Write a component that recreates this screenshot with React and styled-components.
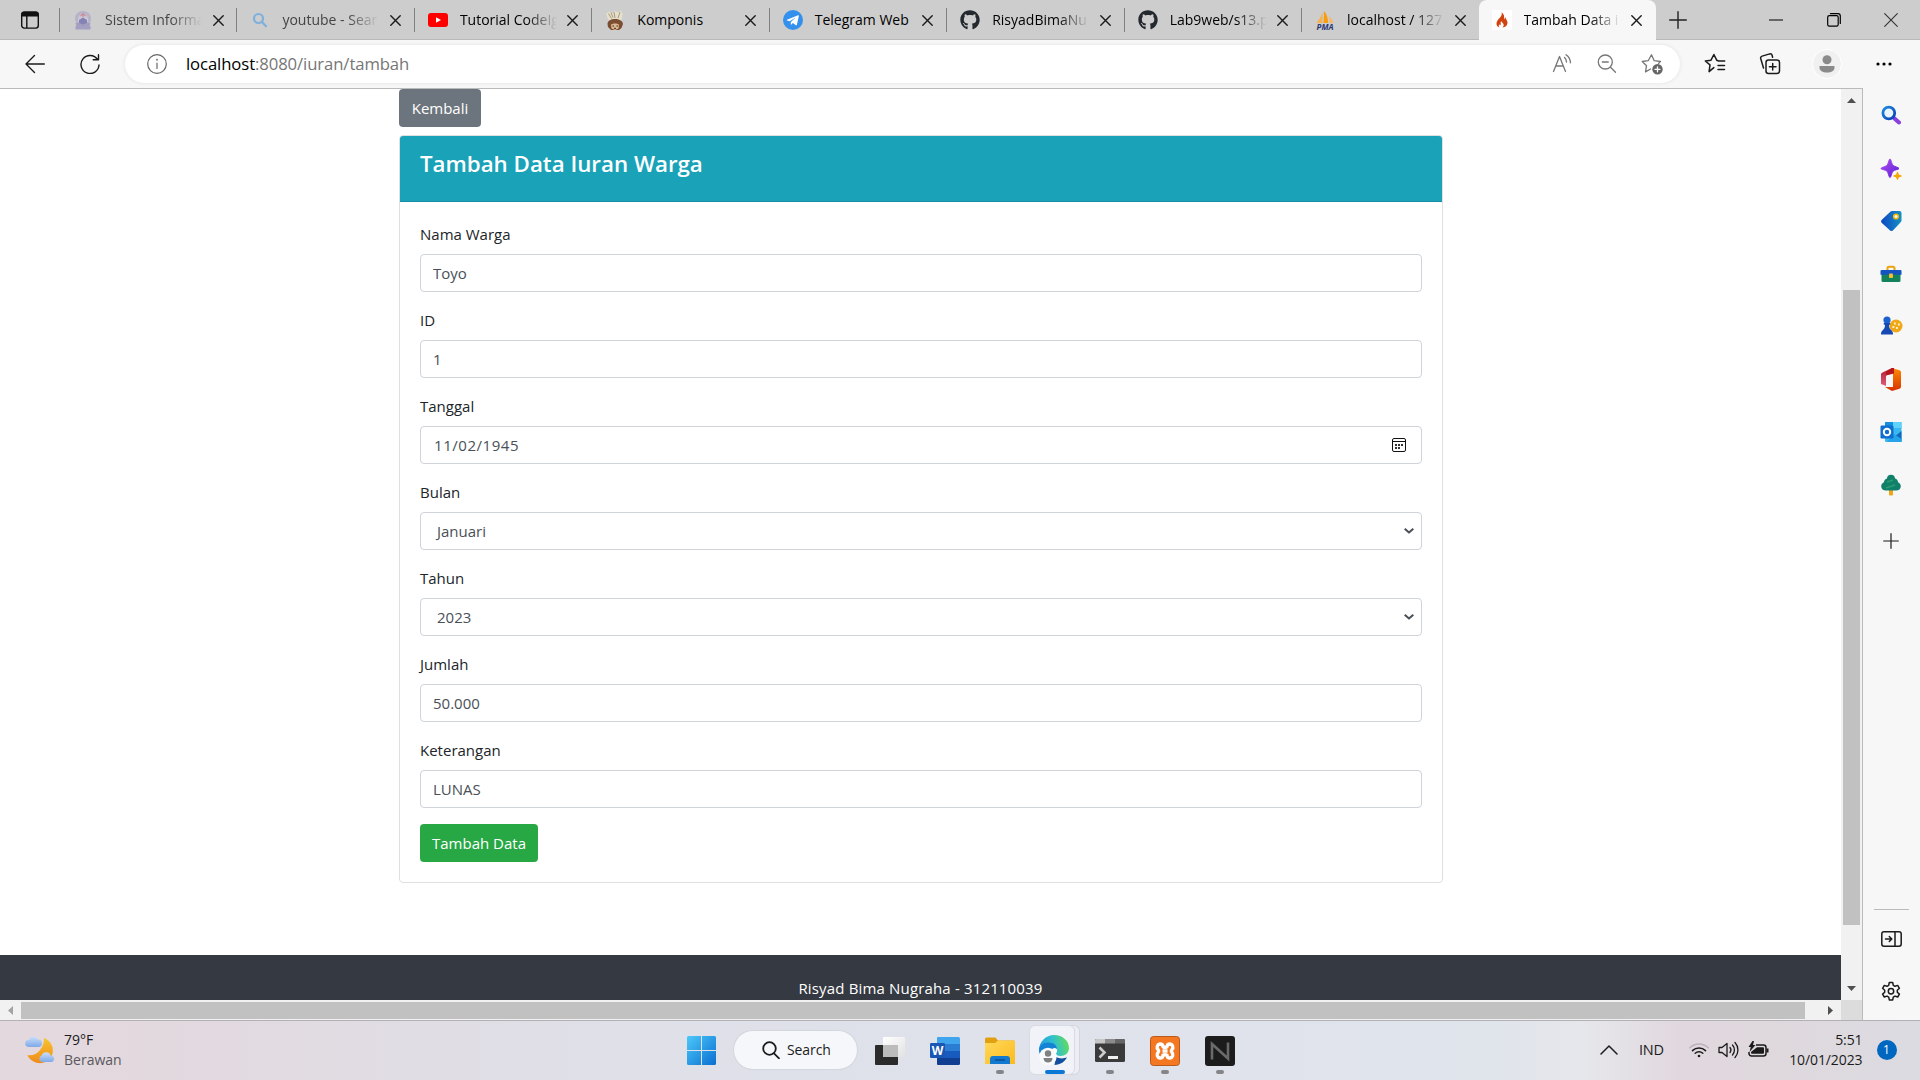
import React from "react";
import styled, { createGlobalStyle } from "styled-components";
import { FaGithub } from "react-icons/fa";

const Global = createGlobalStyle`
  * { box-sizing: border-box; }
  body { margin: 0; overflow: hidden; font-family: "Open Sans", "Noto Sans", sans-serif; color: #212529; }
  svg { display: block; flex: none; }
`;

const Screen = styled.div`
  width: 1920px;
  height: 1080px;
  display: flex;
  flex-direction: column;
  background: #f7f7f7;
  overflow: hidden;
`;

/* ---------- tab strip ---------- */
const TabStrip = styled.div`
  height: 40px;
  flex: none;
  display: flex;
  background: #cdcdcd;
  box-shadow: inset 0 -1px 0 #b9b9b9;
`;
const TabMenu = styled.div`
  width: 59px;
  height: 40px;
  display: flex;
  align-items: center;
  padding-left: 20px;
`;
const Tab = styled.div`
  position: relative;
  width: 177.45px;
  height: 40px;
  flex: none;
  display: flex;
  align-items: center;
  padding-left: ${(p) => (p.$active ? 13 : 14)}px;
  color: ${(p) => (p.$dim ? "#444" : "#000")};
  background: ${(p) => (p.$active ? "#f7f7f7" : "transparent")};
  border-radius: 8px 8px 0 0;
  &::before {
    content: "";
    position: absolute;
    left: 0;
    top: 8px;
    width: ${(p) => (p.$active ? 0 : 1)}px;
    height: 24px;
    background: #808080;
  }
`;
const Favicon = styled.div`
  width: 20px;
  height: 20px;
  display: grid;
  place-items: center;
  background: ${(p) => p.$bg || "transparent"};
`;
const TabTitle = styled.div`
  width: 97px;
  margin-left: 12px;
  margin-right: 8px;
  font-size: 14px;
  line-height: 20px;
  white-space: nowrap;
  mask-image: ${(p) => (p.$fade ? "linear-gradient(90deg, #000 68%, transparent)" : "none")};
`;
const TabClose = styled.div`
  width: 16px;
  display: grid;
  place-items: center;
`;
const NewTab = styled.div`
  width: 44px;
  display: grid;
  place-items: center;
`;
const WindowButtons = styled.div`
  margin-left: auto;
  display: flex;
  & > div {
    width: 57.5px;
    display: grid;
    place-items: center;
  }
`;

/* ---------- toolbar ---------- */
const Toolbar = styled.div`
  height: 48px;
  flex: none;
  display: flex;
  align-items: center;
  padding: 0 0 1px 25px;
`;
const NavButtons = styled.div`
  width: 100px;
  flex: none;
  display: flex;
  gap: 35px;
`;
const AddressBar = styled.div`
  width: 1555px;
  flex: none;
  height: 38px;
  border-radius: 19px;
  background: #fff;
  box-shadow: 0 0 4px rgba(0, 0, 0, 0.09);
  display: flex;
  align-items: center;
  padding: 0 16px 0 22px;
`;
const Url = styled.div`
  margin-left: 19px;
  flex: 1;
  font-size: 16.7px;
  letter-spacing: -0.1px;
  color: #767676;
  & > span { color: #000; }
`;
const BarIcons = styled.div`
  display: flex;
  align-items: center;
  gap: 23px;
`;
const ToolIcons = styled.div`
  display: flex;
  align-items: center;
  flex: none;
  margin-left: 22px;
`;
const ToolSlot = styled.div`
  width: ${(p) => p.$w}px;
  padding-left: ${(p) => p.$pad || 0}px;
  display: grid;
  place-items: center;
`;
const Avatar = styled.div`
  width: 30px;
  height: 30px;
  border-radius: 50%;
  background: #f0f0f0;
  border: 1px solid #fff;
  display: grid;
  place-items: center;
`;

/* ---------- page ---------- */
const Middle = styled.div`
  height: 932px;
  flex: none;
  display: flex;
`;
const Frame = styled.div`
  width: 1863px;
  border-top: 1px solid #bababa;
  border-right: 1px solid #bababa;
  display: grid;
  grid-template-columns: 1841px 21px;
  grid-template-rows: 911px 20px;
  background: #f1f1f1;
`;
const Page = styled.div`
  background: #fff;
  overflow: hidden;
  display: flex;
  flex-direction: column;
`;
const Container = styled.div`
  width: 1044px;
  height: 866px;
  flex: none;
  margin-left: 399px;
  font-size: 15px;
`;
const Button = styled.button`
  display: block;
  height: 38px;
  width: ${(p) => p.$w}px;
  padding: 0;
  border: 0;
  border-radius: 4px;
  background: ${(p) => p.$bg};
  color: #fff;
  font: 15px/38px "Open Sans", sans-serif;
`;
const Card = styled.div`
  margin-top: 8px;
  height: 748px;
  border: 1px solid #dfdfdf;
  border-radius: 4px;
`;
const CardHeader = styled.div`
  height: 66px;
  padding: 13px 20px;
  background: #19a2b8;
  border-bottom: 1px solid #148ea2;
  border-radius: 3px 3px 0 0;
  color: #fff;
  font-size: 22.3px;
  font-weight: 600;
  line-height: 30px;
`;
const CardBody = styled.form`
  padding: 20px;
`;
const Field = styled.div`
  height: 86px;
`;
const Label = styled.label`
  display: block;
  height: 32px;
  line-height: 24px;
  color: #212529;
`;
const Control = styled.div`
  height: 38px;
  display: flex;
  align-items: center;
  justify-content: space-between;
  border: 1px solid #ced4da;
  border-radius: 4px;
  padding: 0 ${(p) => p.$right}px 0 ${(p) => p.$left}px;
  letter-spacing: ${(p) => p.$ls || 0}px;
  color: #495057;
  background: #fff;
`;
const Footer = styled.div`
  height: 45px;
  flex: none;
  background: #353941;
  color: #fff;
  text-align: center;
  padding-top: 21px;
  font-size: 15px;
  letter-spacing: 0.16px;
  line-height: 24px;
`;
const VBar = styled.div`
  display: flex;
  flex-direction: column;
  align-items: center;
  padding: 9px 0;
`;
const VThumb = styled.div`
  width: 17px;
  height: 635px;
  margin-top: 187px;
  margin-bottom: auto;
  background: #c1c1c1;
`;
const HBar = styled.div`
  display: flex;
  align-items: center;
  justify-content: space-between;
  padding: 0 8px;
`;
const HThumb = styled.div`
  width: 1784px;
  height: 17px;
  margin-right: 15px;
  background: #c1c1c1;
`;
const Corner = styled.div`
  background: #dcdcdc;
`;
const SideBar = styled.div`
  flex: 1;
  display: flex;
  flex-direction: column;
  align-items: center;
  padding: 0 1px 3px 0;
`;
const SideSlot = styled.div`
  height: ${(p) => p.$h}px;
  flex: none;
  display: grid;
  place-items: center;
`;
const SideRule = styled.div`
  width: 35px;
  height: 1px;
  background: #bbb;
  margin-top: auto;
`;

/* ---------- taskbar ---------- */
const Taskbar = styled.div`
  height: 60px;
  flex: none;
  border-top: 1px solid #b3b1b5;
  display: flex;
  align-items: center;
  background: linear-gradient(90deg, #e3d8de 0, #e2d9df 170px, #dfe0e8 620px, #dfe2eb 1000px, #e0e4eb 1500px, #e6e7eb 1585px, #e0d8de 1680px, #dfd8dd 1760px, #dcdbe1 1900px);
`;
const Weather = styled.div`
  width: 681px;
  padding: 0 0 2px 24px;
  display: flex;
  align-items: center;
  gap: 8px;
  font-size: 14px;
  line-height: 20px;
  color: #1b1b1b;
  & span { display: block; color: #5b585b; }
`;
const Apps = styled.div`
  width: 914px;
  height: 59px;
  display: flex;
  align-items: center;
`;
const SearchPill = styled.div`
  width: 123px;
  height: 38px;
  margin: 0 5px 1px 12px;
  border-radius: 19px;
  background: #f6f7fa;
  box-shadow: 0 0 1px 1px rgba(0, 0, 0, 0.05);
  display: flex;
  align-items: center;
  padding: 0 0 1px 28px;
  gap: 7px;
  font-size: 14px;
  letter-spacing: -0.1px;
  color: #1b1b1b;
`;
const TaskApp = styled.div`
  position: relative;
  width: ${(p) => p.$w || 55}px;
  height: 59px;
  display: grid;
  place-items: center;
  &::after {
    content: "";
    position: absolute;
    bottom: 6px;
    left: ${(p) => (p.$active ? 17.5 : 23.5)}px;
    width: ${(p) => (p.$active ? 20 : p.$open ? 8 : 0)}px;
    height: 4px;
    border-radius: 2px;
    background: ${(p) => (p.$active ? "#0a78d4" : "#858589")};
  }
`;
const EdgeTile = styled.div`
  width: 44px;
  height: 48px;
  margin: 0 5px 1px 0;
  border-radius: 5px;
  background: #f1f3f8;
  box-shadow: 0 0 0 1px #d9dbe2, 5px 0 0 0 #eceef4, 5px 0 0 1px #d5d7de;
  display: grid;
  place-items: center;
  & svg { margin-left: 4px; }
`;
const Tray = styled.div`
  flex: 1;
  height: 59px;
  display: flex;
  align-items: center;
  color: #1b1b1b;
  padding: 0 0 2px 5px;
  font-size: 14px;
`;
const Lang = styled.div`
  width: 50px;
  margin-left: 21px;
  font-size: 14.5px;
  letter-spacing: -0.2px;
`;
const TrayIcons = styled.div`
  display: flex;
  align-items: center;
  gap: 9px;
`;
const Clock = styled.div`
  width: 93.5px;
  line-height: 20px;
  text-align: right;
  letter-spacing: -0.1px;
`;
const Badge = styled.div`
  width: 20px;
  height: 20px;
  margin-left: 14px;
  border-radius: 50%;
  background: #0067c0;
  color: #fff;
  font-size: 12px;
  line-height: 20px;
  text-align: center;
`;

const Line = ({ w = 20, h = w, vb, c = "#1b1b1b", s = 1.4, children, ...r }) => (
  <svg width={w} height={h} viewBox={vb || `0 0 ${w} ${h}`} fill="none" stroke={c} strokeWidth={s} strokeLinecap="round" strokeLinejoin="round" {...r}>
    {children}
  </svg>
);
const Pic = ({ w = 20, h = w, children }) => (
  <svg width={w} height={h} viewBox={`0 0 ${w} ${h}`}>{children}</svg>
);

const Campus = () => (
  <Pic>
    <path d="M10 1C5.500 1 2 4 2 8.500c0 2 .5 3.500 1.500 4.500h13c1-1 1.500-2.500 1.500-4.500C18 4 14.500 1 10 1z" fill="#b7b3c8" />
    <path d="M5 9a5 5 0 0 1 10 0v3H5z" fill="#cbc7d4" />
    <path d="M10 3v4M7.500 6L10 4l2.500 2" stroke="#d08a96" strokeWidth="1.100" fill="none" />
    <path d="M6 10l4-2.500 4 2.500v5H6z" fill="#8582b6" />
    <path d="M2.500 13h4l3.500 1.500 3.500-1.500h4l-1 3h-13z" fill="#a19ec0" />
    <path d="M2.500 16h15v3.500h-15z" fill="#a3a0c4" />
  </Pic>
);
const Komponis = () => (
  <Pic>
    <path d="M1 4l3-2.500L7 3l3-2 3 1.500L16 .5l1.500 3-.5 6-5 3H6L3 9z" fill="#e6dfcb" />
    <path d="M3.500 3.500l3 5M9 2l1 6M15 2l-2 6M6 2.500l2 5" stroke="#978a6c" strokeWidth=".8" />
    <path d="M2.500 14c0-3.500 3.500-5 7.500-5s7.500 1.500 8 5l-1.500 4-2.500 2H6l-3-3z" fill="#7b4d31" />
    <path d="M6 14.500c2-1.500 6-1.500 8 0l-.5 4-3.500 1.500-3.500-1.500z" fill="#dcb992" />
    <path d="M7.500 16h1.500M11.500 16H13M9 18.300h2" stroke="#3f2a1c" />
  </Pic>
);
const SearchFav = () => (
  <Line w={20} c="#7fb0dc" s={2.200}><circle cx="8.500" cy="8.500" r="4.500" /><path d="M12 12l4 4.300" /></Line>
);
const YouTube = () => (
  <Pic><rect x="0" y="3" width="20" height="14" rx="3" fill="#f00" /><path d="M8 7.200v5.600L13 10z" fill="#fff" /></Pic>
);
const Telegram = () => (
  <Pic><circle cx="10" cy="10" r="10" fill="#3390ec" /><path d="M4 9.800l11-4.500c.6-.2 1 .1.800.9l-1.900 8.600c-.1.600-.6.700-1 .4l-3-2.200-1.500 1.500c-.3.300-.7.200-.7-.2l.2-2.400 4.800-4.500-6 3.900-2.600-.8c-.6-.2-.6-.5-.1-.7z" fill="#fff" /></Pic>
);
const Pma = () => (
  <Pic>
    <path d="M7.500 2v11H1.500C4 10 6.500 6 7.500 2z" fill="#f9b04a" />
    <path d="M9 1c3 3 4.200 8 4 12H8.700z" fill="#f89c0e" />
    <path d="M14 6c2 2 4 5 4.300 7H14.500z" fill="#f9b866" />
    <text x="10" y="19.500" textAnchor="middle" fontFamily="Open Sans, sans-serif" fontSize="8" fontWeight="700" fontStyle="italic" fill="#2b3a78">PMA</text>
  </Pic>
);
const Flame = () => (
  <Pic><path d="M9.600 2.500c.7 2.400-.5 3.800-2 5.600C6 10 4.300 11.500 4.500 14c.1 1.700 1.300 3 3 3.600-.9-1-1-2.300-.2-3.300.5 1.200 1.500 1 1.500 0 0-1.300-.6-1.800.5-3.200 0 1.400 2.400 1.900 2.400 4 0 1-.4 1.800-1.200 2.500 3-.5 5-2.300 5-4.900 0-2.200-1.600-3.200-2.100-5.400-.6.700-.6 1.300-.2 2.200-1.700-.7-.7-2.500-1.300-4.200-.4-1.200-1.200-2.200-2.300-2.800z" fill="#d2440f" /></Pic>
);

const TABS = [
  { t: "Sistem Informa", icon: <Campus />, fade: 1, dim: 1 },
  { t: "youtube - Sear", icon: <SearchFav />, fade: 1, dim: 1 },
  { t: "Tutorial CodeIg", icon: <YouTube />, fade: 1 },
  { t: "Komponis", icon: <Komponis /> },
  { t: "Telegram Web", icon: <Telegram /> },
  { t: "RisyadBimaNu", icon: <FaGithub size={20} color="#24292f" />, fade: 1 },
  { t: "Lab9web/s13.p", icon: <FaGithub size={20} color="#24292f" />, fade: 1 },
  { t: "localhost / 127", icon: <Pma />, fade: 1 },
  { t: "Tambah Data i", icon: <Flame />, fade: 1, active: 1 },
];

const Calendar = () => (
  <svg width="14" height="14" viewBox="0 0 14 14">
    <rect x=".5" y=".5" width="13" height="13" rx="1.500" fill="none" stroke="#111" />
    <path d="M.5 3.500h13" stroke="#111" />
    <path d="M3 6h2v2H3zM6 6h2v2H6zM9 6h2v2H9zM3 9h2v2H3zM6 9h2v2H6z" fill="#333" />
  </svg>
);
const Chevron = () => (
  <Line w={10} h={6} c="#495057" s={2} strokeLinecap="butt"><path d="M.7.8L5 4.600 9.300.8" /></Line>
);

const FIELDS = [
  { l: "Nama Warga", v: "Toyo" },
  { l: "ID", v: "1" },
  { l: "Tanggal", v: "11/02/1945", left: 13, right: 15, ls: 0.55, icon: <Calendar /> },
  { l: "Bulan", v: "Januari", left: 16, right: 7, icon: <Chevron /> },
  { l: "Tahun", v: "2023", left: 16, right: 7, icon: <Chevron /> },
  { l: "Jumlah", v: "50.000" },
  { l: "Keterangan", v: "LUNAS" },
];

const Grad = ({ id, a, b, x2 = 1, y2 = 1 }) => (
  <linearGradient id={id} x1="0" y1="0" x2={x2} y2={y2}><stop stopColor={a} /><stop offset="1" stopColor={b} /></linearGradient>
);

const SIDE = [
  [54, <Pic w={20}>
    <defs><Grad id="sa" a="#1f8be0" b="#0a3fb5" /></defs>
    <path d="M13.500 13.500l4.500 4" stroke="#8a3fe0" strokeWidth="4" strokeLinecap="round" />
    <circle cx="7.800" cy="8" r="5.900" fill="#e9f4fc" stroke="url(#sa)" strokeWidth="2.800" />
  </Pic>],
  [53, <Pic w={22}>
    <defs><Grad id="sb" a="#b04df5" b="#5b1fd0" /></defs>
    <path d="M10 1c1 0 1.700 5 3 6.300S19 9.500 19 10.500s-4.700 1.300-6 2.700-2 6.300-3 6.300-1.800-5-3-6.300S1 11.500 1 10.500s4.700-1.800 6-3.200S9 1 10 1z" fill="url(#sb)" stroke="url(#sb)" strokeWidth="1" strokeLinejoin="round" />
    <path d="M17.500 13.500c.6 0 .9 2.500 1.500 3.100s3 .8 3 1.400-2.300.9-3 1.500-.9 2.500-1.500 2.500-.9-1.800-1.500-2.500-3-.8-3-1.500 2.400-.8 3-1.400.9-3.100 1.500-3.100z" fill="#f5a800" />
  </Pic>],
  [52, <Pic w={22}>
    <defs><Grad id="sc" a="#0e46c4" b="#1590c4" x2={1} y2={0} /></defs>
    <path d="M12 1h7.500a2 2 0 0 1 2 2v7.500a2 2 0 0 1-.6 1.400l-8 8.500a2 2 0 0 1-2.800 0l-8.500-7.700a2 2 0 0 1 0-2.700l9-8.400A2 2 0 0 1 12 1z" fill="url(#sc)" />
    <circle cx="16" cy="6.500" r="2.300" fill="#fff" stroke="#f2b600" strokeWidth="1.600" />
  </Pic>],
  [53, <Pic w={22} h={18}>
    <path d="M7.500 6V3.200a1.500 1.500 0 0 1 1.500-1.500h4a1.500 1.500 0 0 1 1.500 1.500V6" fill="none" stroke="#eaa30f" strokeWidth="2" />
    <path d="M1.500 8h19v7.500a1.500 1.500 0 0 1-1.500 1.500H3a1.500 1.500 0 0 1-1.500-1.500z" fill="#14835c" />
    <path d="M1.500 5h19a1 1 0 0 1 1 1v3.800h-21V6a1 1 0 0 1 1-1z" fill="#1454c0" />
    <rect x="9" y="8.500" width="4" height="4.500" rx="1" fill="#f6bf33" />
  </Pic>],
  [52, <Pic w={23} h={20}>
    <circle cx="16" cy="10" r="6.500" fill="#f0a818" />
    <path d="M14 6.500h1.800v2H14zM18 7.500h1.800v2H18zM16 11h1.800v2H16zM12.500 10h1.800v2h-1.800z" fill="#fff3c8" />
    <circle cx="7" cy="4" r="3.600" fill="#1c62cf" />
    <path d="M3.800 7h6.400v1.800H9c0 2.800.8 4.400 3 6.200.8.800 1 1.800 1 3.500H1c0-1.700.2-2.700 1-3.500 2.200-1.800 3-3.400 3-6.200H3.800z" fill="#1649b4" />
  </Pic>],
  [54, <Pic w={22} h={25}>
    <defs><Grad id="sd" a="#b3172e" b="#dd5f7e" x2={0} /><Grad id="se" a="#ff8a00" b="#d83200" x2={0} /></defs>
    <path d="M12 1L2.500 5.500A2 2 0 0 0 1 7.500V17l5 2V8.500L12 6z" fill="url(#sd)" />
    <path d="M12 1l7.500 2.300a2 2 0 0 1 1.500 2v14.400a2 2 0 0 1-1.500 2L12 24l-7-4h8V6z" fill="url(#se)" />
    <path d="M12 1l2 0v5.500L6 8.500V5z" fill="#b4161b" />
  </Pic>],
  [51, <Pic w={22}>
    <rect x="5" y="1" width="16.500" height="20" rx="1.200" fill="#38b8f2" />
    <path d="M13 1h8.500v6H13z" fill="#5fd2fb" /><path d="M5 1h8v6H5z" fill="#1490df" />
    <path d="M21.500 10v10a1 1 0 0 1-1 1H8z" fill="#1169bd" /><path d="M14 13l7.500 5v3H7z" fill="#26a4ea" />
    <rect x=".5" y="4.500" width="13" height="13" rx="1.200" fill="#0f6fce" />
    <circle cx="7" cy="11" r="3.200" fill="none" stroke="#fff" strokeWidth="2" />
  </Pic>],
  [55, <Pic w={20} h={22}>
    <rect x="8" y="15" width="4" height="6.500" rx="1" fill="#f2a516" />
    <path d="M10 .8c2.500 0 4 1.700 4 3.700 1.900.6 3 1.900 3 3.700 1.900.8 2.800 2.300 2.800 4 0 2.700-2 4.300-4.800 4.300H5c-2.800 0-4.800-1.600-4.800-4.300 0-1.700.9-3.200 2.800-4 0-1.800 1.100-3.100 3-3.700 0-2 1.500-3.700 4-3.700z" fill="#11806a" />
    <path d="M6 8l6-2M5 14l9-3" stroke="#2b9c6e" strokeWidth="1.500" />
  </Pic>],
  [57, <Line w={16} s={1.200}><path d="M8 .7v14.600M.7 8h14.600" /></Line>],
];

const Gear = () => (
  <Line w={22} s={1.500}>
    <path d="M9.300 1.500h3.400l.6 2.800 1.700 1 2.700-.9 1.700 2.900-2.100 1.900v2l2.100 1.900-1.700 2.900-2.700-.9-1.700 1-.6 2.800H9.300l-.6-2.800-1.700-1-2.700.9-1.700-2.900 2.100-1.900v-2L2.600 7.300l1.700-2.900 2.700.9 1.700-1z" />
    <circle cx="11" cy="10.200" r="2.700" />
  </Line>
);

const Edge = () => (
  <svg width="30" height="30" viewBox="0 0 30 30">
    <defs>
      <linearGradient id="ea" x1="0" y1=".6" x2="1" y2=".4"><stop stopColor="#2499dd" /><stop offset=".5" stopColor="#2fbfd0" /><stop offset="1" stopColor="#62dd5c" /></linearGradient>
    </defs>
    <path d="M15 0c9 0 15 6 15 13 0 5-4 8-8.500 8-3 0-4.500-1-4.500-2.200 0-1 1-1.300 1-3.300 0-3-3-5.500-7.500-5.500C6 10 2 12 0 15.500 0 6.500 7 0 15 0z" fill="url(#ea)" />
    <path d="M0 15.500C0 11 4 7.500 9.500 7.500c5 0 8.500 2.800 8.500 6.500-3-.5-6 2-6 6H2C.5 19 0 17 0 15.500z" fill="#1483d6" />
    <path d="M17 22c3 1.800 8 1.800 11 .3C26 26.500 21.500 30 15.500 30z" fill="#134f9e" />
    <circle cx="9" cy="21.500" r="8.700" fill="#f8fafb" />
    <circle cx="15.500" cy="15.500" r="2.600" fill="#f8fafb" />
    <circle cx="9" cy="18.500" r="3.200" fill="#7e8082" /><path d="M4.500 23h9c0 3-2 4.500-4.500 4.500S4.500 26 4.500 23z" fill="#7e8082" />
  </svg>
);

export default function App() {
  return (
    <Screen>
      <Global />
      <TabStrip>
        <TabMenu>
          <svg width="20" height="20" viewBox="0 0 20 20"><rect x="1.700" y="2.300" width="16.600" height="15.800" rx="2.500" fill="none" stroke="#111" strokeWidth="1.400" /><path d="M1.500 4a2.500 2.500 0 0 1 2.500-2.500h12a2.500 2.500 0 0 1 2.500 2.500v2.500h-17z" fill="#111" /><path d="M6.800 6v12" stroke="#111" strokeWidth="1.400" /></svg>
        </TabMenu>
        {TABS.map((t) => (
          <Tab key={t.t} $active={t.active} $dim={t.dim}>
            <Favicon $bg={t.active ? "#fff" : undefined}>{t.icon}</Favicon>
            <TabTitle $fade={t.fade}>{t.t}</TabTitle>
            <TabClose><Line w={11} s={1.400}><path d="M.8.800l9.400 9.400M10.200.8L.8 10.200" /></Line></TabClose>
          </Tab>
        ))}
        <NewTab><Line w={18} s={1.400} c="#222"><path d="M9 .7v16.600M.7 9h16.600" /></Line></NewTab>
        <WindowButtons>
          <div><Line w={14} s={1.200} c="#000"><path d="M.5 7h13" /></Line></div>
          <div><Line w={14} s={1.200} c="#000"><rect x=".7" y="2.700" width="10.500" height="10.500" rx="1.600" /><path d="M3.500.7h7.500a2.300 2.300 0 0 1 2.300 2.300v7.500" /></Line></div>
          <div><Line w={14} s={1.100} c="#333"><path d="M.7.700l12.600 12.600M13.300.7L.7 13.300" /></Line></div>
        </WindowButtons>
      </TabStrip>

      <Toolbar>
        <NavButtons>
          <Line w={20} s={1.400}><path d="M19.300 10H1M9.500 1.500L1 10l8.500 8.500" /></Line>
          <Line w={20} s={1.400}><path d="M17.500 5.500A9 9 0 1 0 19 11M18.500 .8v5h-5.300" /></Line>
        </NavButtons>
        <AddressBar>
          <Line w={20} c="#666" s={1.200}><circle cx="10" cy="10" r="9.300" /><path d="M10 9v5.500" /><path d="M10 5.600v.3" strokeWidth="1.600" /></Line>
          <Url><span>localhost</span>:8080/iuran/tambah</Url>
          <BarIcons>
            <Line w={22} c="#777" s={1.300}><path d="M2.500 18.500L8.500 3.500l6 15M4.800 13h7.400M13.500 4.500c1.200 1 1.900 2.400 2 4.500M15 1.800c2.800 1.800 4.300 4.500 4.500 8" /></Line>
            <Line w={22} c="#777" s={1.300}><circle cx="9.300" cy="9" r="7" /><path d="M14.500 14.200l5 5M6.300 9h6" /></Line>
            <Line w={23} h={22} c="#777" s={1.300}><path d="M9.500 16L4.500 18.900l1-6.200L1.200 8.500l6-.8L10.500 1.700l2.700 6 6.300.8-2 2" /><circle cx="16.500" cy="16.300" r="5.200" fill="#666" stroke="none" /><path d="M16.500 13.800v5M14 16.300h5" stroke="#fff" /></Line>
          </BarIcons>
        </AddressBar>
        <ToolIcons>
          <ToolSlot $w={26}><Line w={22} s={1.500}><path d="M9.800 14.600l-4.700 4 .9-6.700L1.300 8l5.700-.8L9.900 1.500l2.800 5.700 2 .8h6M14 12.500h6.500M14 16.500h6.500" /></Line></ToolSlot>
          <ToolSlot $w={84}><Line w={22} s={1.500}><rect x="7" y="7" width="13.500" height="13.500" rx="2.500" /><path d="M13.700 10.500v6.600M10.400 13.800H17M4.500 15L1.700 5.500a2 2 0 0 1 1.400-2.400l7.600-2.200a2 2 0 0 1 2.400 1.400l.5 1.900" /></Line></ToolSlot>
          <ToolSlot $w={30}><Avatar><Pic w={16} h={18}><circle cx="8" cy="4.800" r="4.500" fill="#8a8a8a" /><path d="M.5 11h15v1.500c0 3.200-3 5-7.500 5S.5 15.700.5 12.500z" fill="#8a8a8a" /></Pic></Avatar></ToolSlot>
          <ToolSlot $w={78} $pad={6}><Pic w={16} h={4}><circle cx="2" cy="2" r="1.600" /><circle cx="8" cy="2" r="1.600" /><circle cx="14" cy="2" r="1.600" /></Pic></ToolSlot>
        </ToolIcons>
      </Toolbar>

      <Middle>
        <Frame>
          <Page>
            <Container>
              <Button $bg="#6c757d" $w={82}>Kembali</Button>
              <Card>
                <CardHeader>Tambah Data Iuran Warga</CardHeader>
                <CardBody>
                  {FIELDS.map((f) => (
                    <Field key={f.l}>
                      <Label>{f.l}</Label>
                      <Control $left={f.left || 12} $right={f.right || 12} $ls={f.ls}><span>{f.v}</span>{f.icon}</Control>
                    </Field>
                  ))}
                  <Button type="button" $bg="#28a745" $w={118}>Tambah Data</Button>
                </CardBody>
              </Card>
            </Container>
            <Footer>Risyad Bima Nugraha - 312110039</Footer>
          </Page>
          <VBar>
            <Pic w={9} h={5}><path d="M4.500 0L9 5H0z" fill="#505050" /></Pic>
            <VThumb />
            <Pic w={9} h={5}><path d="M4.500 5L9 0H0z" fill="#505050" /></Pic>
          </VBar>
          <HBar>
            <Pic w={5} h={9}><path d="M0 4.500L5 0v9z" fill="#a3a3a3" /></Pic>
            <HThumb />
            <Pic w={5} h={9}><path d="M5 4.500L0 0v9z" fill="#505050" /></Pic>
          </HBar>
          <Corner />
        </Frame>
        <SideBar>
          {SIDE.map(([h, icon], i) => <SideSlot key={i} $h={h}>{icon}</SideSlot>)}
          <SideRule />
          <SideSlot $h={57}><Line w={21} h={16} s={1.500}><rect x=".8" y=".8" width="19.400" height="14.400" rx="2.200" /><path d="M14 .8v14.400M4.500 8h6M8.300 5.500L10.800 8l-2.500 2.500" /></Line></SideSlot>
          <SideSlot $h={50}><Gear /></SideSlot>
        </SideBar>
      </Middle>

      <Taskbar>
        <Weather>
          <svg width="32" height="30" viewBox="0 0 32 30">
            <defs><Grad id="ma" a="#f7c52c" b="#f08a1c" x2={0} /><Grad id="mb" a="#c9defa" b="#7fa9e8" x2={0} /></defs>
            <path d="M20 3c7 3 10 9 8.500 15.500S20 29 14 28 4.500 23 3.500 20c8 2 17-6 16.500-17z" fill="url(#ma)" />
            <path d="M4.500 12a3.500 3.500 0 0 1 .3-7A5 5 0 0 1 14 4.500a3.800 3.800 0 0 1 1 7.500z" fill="url(#mb)" />
            <path d="M17.500 27a3.500 3.500 0 0 1 0-6.500 5 5 0 0 1 9.300 0 3.300 3.300 0 0 1 .7 6.500z" fill="url(#mb)" />
          </svg>
          <div>79°F<span>Berawan</span></div>
        </Weather>
        <Apps>
          <TaskApp $w={41}>
            <Pic w={29}><defs><linearGradient id="wa" gradientUnits="userSpaceOnUse" x1="0" y1="0" x2="29" y2="29"><stop stopColor="#4cc8fa" /><stop offset="1" stopColor="#0a6fd0" /></linearGradient></defs><path d="M1.500 0H14v14H0V1.500A1.500 1.500 0 0 1 1.500 0zM15 0h12.500A1.500 1.500 0 0 1 29 1.500V14H15zM0 15h14v14H1.500A1.500 1.500 0 0 1 0 27.500zM15 15h14v12.500a1.500 1.500 0 0 1-1.500 1.500H15z" fill="url(#wa)" /></Pic>
          </TaskApp>
          <SearchPill><Line w={18} s={1.800}><circle cx="7.500" cy="7.500" r="6.300" /><path d="M12 12.300l5 5" /></Line>Search</SearchPill>
          <TaskApp><Pic w={30} h={28}><defs><Grad id="ta" a="#fff" b="#e2e2e2" /></defs><rect x="0" y="8" width="23" height="20" rx="1" fill="#2b2b2b" /><rect x="8" y="0" width="22" height="20" rx="1" fill="url(#ta)" /><path d="M8 8h15v12H8z" fill="#bcbcbc" /></Pic></TaskApp>
          <TaskApp><Pic w={30} h={28}>
            <path d="M8 0h20.500A1.500 1.500 0 0 1 30 1.500V7H7V1A1 1 0 0 1 8 0z" fill="#41a5ee" /><path d="M7 7h23v7H7z" fill="#2b7cd3" /><path d="M7 14h23v7H7z" fill="#185abd" /><path d="M7 21h23v5.500a1.500 1.500 0 0 1-1.500 1.500H8a1 1 0 0 1-1-1z" fill="#103f91" />
            <rect x="0" y="6" width="15" height="15" rx="1.300" fill="#1a56b4" />
            <text x="7.500" y="18" textAnchor="middle" fontFamily="Open Sans, sans-serif" fontWeight="700" fontSize="12" fill="#fff">W</text>
          </Pic></TaskApp>
          <TaskApp $open><Pic w={30} h={28}><defs><Grad id="fa" a="#ffd95a" b="#fcba1e" /></defs><path d="M0 2a1.500 1.500 0 0 1 1.500-1.500h9L13 3.500h15.500A1.500 1.500 0 0 1 30 5v4H0z" fill="#e0a010" /><path d="M0 6h10l3-2.500h15.500A1.500 1.500 0 0 1 30 5v22H0z" fill="url(#fa)" /><path d="M5 27v-5a3 3 0 0 1 3-3h14a3 3 0 0 1 3 3v5z" fill="#1179cf" /><path d="M10 23h10" stroke="#0b4f93" strokeWidth="1.500" /></Pic></TaskApp>
          <TaskApp $active><EdgeTile><Edge /></EdgeTile></TaskApp>
          <TaskApp $open><Pic w={30} h={23}><rect width="30" height="23" rx="1.500" fill="#3a3a3a" /><path d="M0 4.500V1.500A1.500 1.500 0 0 1 1.500 0H10v4.500z" fill="#c7c7c7" /><path d="M10 0h10v4.500H10z" fill="#8c8c8c" /><path d="M20 0h8.500A1.500 1.500 0 0 1 30 1.500v3H20z" fill="#666" /><path d="M4.500 8.500l5 5-5 5" stroke="#ccc" strokeWidth="2.600" fill="none" /><path d="M13 17h10v3H13z" fill="#f0f0f0" /></Pic></TaskApp>
          <TaskApp $open><Pic w={30}><rect x=".5" y=".5" width="29" height="29" rx="3" fill="#f47721" stroke="#b9591b" /><path d="M10 8a3 3 0 0 1 3 2.700q2 1.200 4 0A3 3 0 0 1 20 8a3.300 3.300 0 0 1 1.800 5.700q-1 1.300 0 2.600A3.300 3.300 0 0 1 20 22a3 3 0 0 1-3-2.700q-2-1.200-4 0A3 3 0 0 1 10 22a3.300 3.300 0 0 1-1.800-5.700q1-1.300 0-2.600A3.300 3.300 0 0 1 10 8zM12.500 15h5" stroke="#fff" strokeWidth="3.400" fill="none" strokeLinejoin="round" /></Pic></TaskApp>
          <TaskApp $open><Pic w={30}><rect width="30" height="30" rx="3" fill="#1c1c1c" /><path d="M7 23.500V8l16 14.500V6.500" stroke="#6a6a6a" strokeWidth="2.600" fill="none" /></Pic></TaskApp>
        </Apps>
        <Tray>
          <Line w={18} h={10} s={1.500}><path d="M1 9l8-8 8 8" /></Line>
          <Lang>IND</Lang>
          <TrayIcons>
            <Line w={20} h={16} s={1.500}><path d="M.8 5.800a13 13 0 0 1 18.400 0" stroke="#b9b4b8" /><path d="M3.500 8.600a9.200 9.200 0 0 1 13 0M6.200 11.300a5.400 5.400 0 0 1 7.600 0" /><circle cx="10" cy="14" r="1.300" fill="#1b1b1b" stroke="none" /></Line>
            <Line w={21} h={18} s={1.300}><path d="M1 6.500v5h3l5 4V2.500l-5 4zM12 6.500a4 4 0 0 1 0 5M14.500 4a7.500 7.500 0 0 1 0 10M17 1.500a11 11 0 0 1 0 15" /></Line>
            <Pic w={21} h={17}><path d="M8 4h7.500a2.500 2.500 0 0 1 2.500 2.500v6a2.500 2.500 0 0 1-2.500 2.500h-12A2.500 2.500 0 0 1 1 12.500V11" fill="none" stroke="#1b1b1b" strokeWidth="1.500" /><path d="M9 6.200h6a1 1 0 0 1 1 1v4.600a1 1 0 0 1-1 1H4a1 1 0 0 1-1-1V11z" fill="#1b1b1b" /><path d="M18.500 7.500h2v4h-2z" fill="#1b1b1b" /><path d="M4.500 0L.5 6h2.300L1.500 11 7.500 4H5L6 0z" fill="#1b1b1b" /></Pic>
          </TrayIcons>
          <Clock>5:51<br />10/01/2023</Clock>
          <Badge>1</Badge>
        </Tray>
      </Taskbar>
    </Screen>
  );
}
